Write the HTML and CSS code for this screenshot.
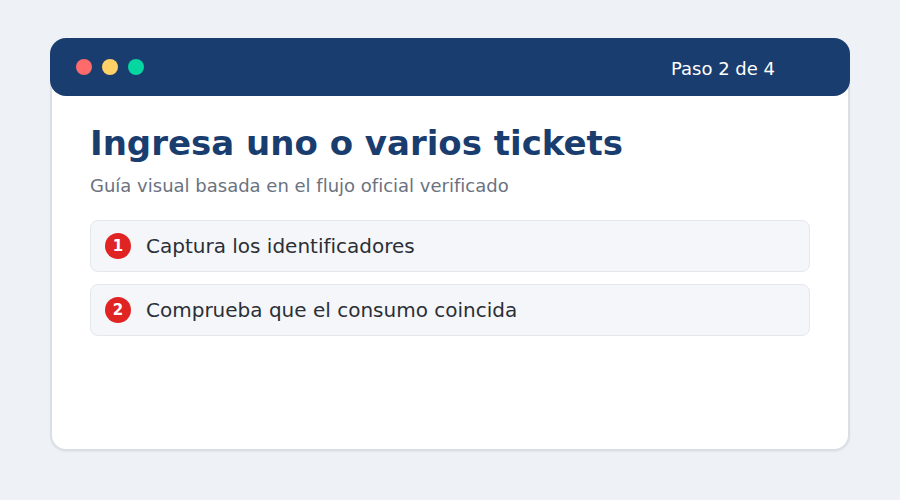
FILE: index.html
```html
<!DOCTYPE html>
<html lang="es">
<head>
<meta charset="utf-8">
<title>Paso 2 de 4</title>
<link rel="stylesheet" href="styles.css">
</head>
<body>
<div class="window">
  <div class="titlebar">
    <div class="dots">
      <span class="dot red"></span>
      <span class="dot yellow"></span>
      <span class="dot green"></span>
    </div>
    <div class="step">Paso 2 de 4</div>
  </div>
  <div class="content">
    <h1 class="title">Ingresa uno o varios tickets</h1>
    <p class="subtitle">Guía visual basada en el flujo oficial verificado</p>
    <ul class="steps">
      <li class="item"><span class="badge">1</span><span class="label">Captura los identificadores</span></li>
      <li class="item"><span class="badge">2</span><span class="label">Comprueba que el consumo coincida</span></li>
    </ul>
  </div>
</div>
</body>
</html>
```

FILE: styles.css
```css
* { box-sizing: border-box; }
html, body { margin: 0; padding: 0; }
body {
  width: 900px;
  height: 500px;
  background: #eef1f5;
  font-family: "DejaVu Sans", sans-serif;
  padding: 38px 50px 0 50px;
}
.window {
  width: 800px;
  height: 413px;
  background: #ffffff;
  border: 2px solid #d9dfe7;
  border-top: none;
  border-radius: 16px;
  box-shadow: 0 1px 2px rgba(0,0,0,0.05);
}
.titlebar {
  margin: 0 -2px;
  height: 58px;
  background: #1a3d6f;
  border-radius: 16px;
  display: flex;
  align-items: center;
  justify-content: space-between;
  padding: 0 75px 0 26px;
}
.dots { display: flex; gap: 10px; }
.dot { width: 16px; height: 16px; border-radius: 50%; display: block; }
.red { background: #ff6b6b; }
.yellow { background: #ffd166; }
.green { background: #06d6a0; }
.step {
  color: #ffffff;
  font-size: 18px;
  margin-top: 2px;
}
.content {
  padding: 27px 38px 0 38px;
}
.title {
  margin: 0;
  font-size: 34px;
  line-height: 40px;
  font-weight: bold;
  color: #1a3d6f;
}
.subtitle {
  margin: 10px 0 0 0;
  font-size: 18px;
  line-height: 26px;
  color: #6b7280;
}
.steps {
  list-style: none;
  margin: 21px 0 0 0;
  padding: 0;
  display: flex;
  flex-direction: column;
  gap: 12px;
}
.item {
  height: 52px;
  background: #f4f6fa;
  border: 1px solid #e3e8ef;
  border-radius: 8px;
  display: flex;
  align-items: center;
  padding: 0 14px;
  gap: 15px;
}
.badge {
  width: 26px;
  height: 26px;
  border-radius: 50%;
  background: #e02424;
  color: #ffffff;
  font-weight: bold;
  font-size: 15px;
  display: flex;
  align-items: center;
  justify-content: center;
  flex: none;
}
.label {
  font-size: 20px;
  color: #2b2f36;
}
```
